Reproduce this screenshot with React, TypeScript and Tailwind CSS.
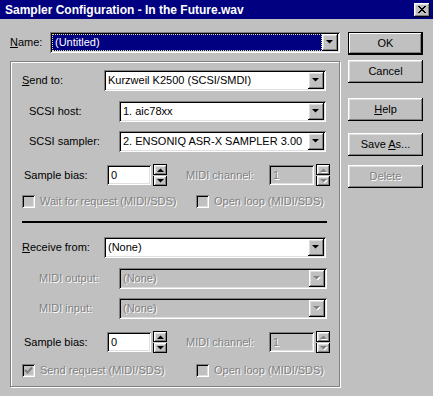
const sunken =
  'shadow-[inset_1px_1px_0_#808080,inset_-1px_-1px_0_#fff,inset_2px_2px_0_#000,inset_-2px_-2px_0_#dfdfdf]';
const raised =
  'shadow-[inset_-1px_-1px_0_#000,inset_1px_1px_0_#fff,inset_-2px_-2px_0_#808080,inset_2px_2px_0_#dfdfdf]';
const dim = 'text-[#808080] [text-shadow:1px_1px_0_#fff]';

function Arrow({ up, disabled }: { up?: boolean; disabled?: boolean }) {
  const pts = up ? '0,4 3.5,0.5 7,4' : '0,0 7,0 3.5,3.5';
  return (
    <svg width="8" height="5" viewBox="0 0 8 5" className="overflow-visible">
      {disabled && <polygon points={pts} fill="#fff" transform="translate(1 1)" />}
      <polygon points={pts} fill={disabled ? '#808080' : '#000'} />
    </svg>
  );
}

function Combo({ w, text, disabled, focused }: { w: string; text: string; disabled?: boolean; focused?: boolean }) {
  return (
    <div className={`flex h-[21px] p-[2px] ${w} ${sunken} ${disabled ? 'bg-[#c0c0c0]' : 'bg-white'}`}>
      <div
        className={`flex-1 flex items-center px-[2px] whitespace-nowrap overflow-hidden ${
          focused ? 'bg-[#000080] text-white border border-dotted border-[#e0e0a0] px-[1px]' : ''
        } ${disabled ? dim : ''}`}
      >
        {text}
      </div>
      <div className={`w-[16px] h-[17px] bg-[#c0c0c0] flex items-center justify-center ${raised}`}>
        <Arrow disabled={disabled} />
      </div>
    </div>
  );
}

function Spin({ disabled }: { disabled?: boolean }) {
  return (
    <div className="flex flex-col w-[14px] h-[22px] gap-[1px] ml-[2px]">
      <div className={`flex-1 bg-[#c0c0c0] flex items-center justify-center border-t border-l border-[#000] ${raised}`}>
        <Arrow up disabled={disabled} />
      </div>
      <div className={`flex-1 bg-[#c0c0c0] flex items-center justify-center border-l border-[#000] ${raised}`}>
        <Arrow disabled={disabled} />
      </div>
    </div>
  );
}

function Edit({ w, value, disabled }: { w: string; value: string; disabled?: boolean }) {
  return (
    <div className={`h-[20px] ${w} ${sunken} ${disabled ? 'bg-[#c0c0c0]' : 'bg-white'} flex items-center pl-[4px]`}>
      <span className={disabled ? dim : ''}>{value}</span>
    </div>
  );
}

function Check({ label, checked, wide }: { label: string; checked?: boolean; wide?: boolean }) {
  return (
    <div className={`flex items-center ${wide ? 'w-[174px]' : ''}`}>
      <div className={`w-[13px] h-[13px] bg-[#c0c0c0] ${sunken} flex items-center justify-center`}>
        {checked && (
          <svg width="9" height="9" viewBox="0 0 9 9">
            <path d="M1 4 L3.5 6.5 L8 1.5" stroke="#808080" strokeWidth="2" fill="none" />
          </svg>
        )}
      </div>
      <span className={`ml-[5px] ${dim}`}>{label}</span>
    </div>
  );
}

function BiasRow({ mt }: { mt: string }) {
  return (
    <div className={`flex items-center h-[22px] pl-[13px] ${mt}`}>
      <span className="w-[83px]">Sample bias:</span>
      <Edit w="w-[44px]" value="0" />
      <Spin />
      <span className={`ml-[19px] w-[83px] ${dim}`}>MIDI channel:</span>
      <Edit w="w-[45px]" value="1" disabled />
      <Spin disabled />
    </div>
  );
}

function Btn({ label, def, disabled, mt }: { label: React.ReactNode; def?: boolean; disabled?: boolean; mt: string }) {
  return (
    <div
      className={`w-[75px] h-[23px] bg-[#c0c0c0] flex items-center justify-center ${mt} ${
        def ? 'border border-black shadow-[inset_-1px_-1px_0_#000,inset_1px_1px_0_#fff,inset_-2px_-2px_0_#808080]' : raised
      } ${disabled ? dim : ''}`}
    >
      {label}
    </div>
  );
}

export default function App() {
  return (
    <div className="w-[433px] h-[396px] bg-[#c0c0c0] text-[11px] leading-none text-black font-['Liberation_Sans',Arial,sans-serif] overflow-hidden select-none">
      {/* Title bar */}
      <div className="h-[19px] bg-[#000080] flex items-center pl-[5px] pr-[3px]">
        <span className="flex-1 text-white font-bold text-[12px]">Sampler Configuration - In the Future.wav</span>
        <div className={`w-[16px] h-[14px] bg-[#c0c0c0] flex items-center justify-center ${raised}`}>
          <svg width="8" height="7" viewBox="0 0 8 7" shapeRendering="crispEdges">
            <path d="M0 0h2v1h-2zM6 0h2v1h-2zM1 1h2v1h-2zM5 1h2v1h-2zM2 2h4v1h-4zM3 3h2v1h-2zM2 4h4v1h-4zM1 5h2v1h-2zM5 5h2v1h-2zM0 6h2v1h-2zM6 6h2v1h-2z" fill="#000" />
          </svg>
        </div>
      </div>

      <div className="flex pl-[10px] pt-[13px]">
        {/* Left column */}
        <div className="w-[330px]">
          <div className="flex items-center h-[21px]">
            <span className="w-[40px]">
              <u>N</u>ame:
            </span>
            <Combo w="w-[290px]" text="(Untitled)" focused />
          </div>

          {/* Group */}
          <div className="mt-[8px] h-[326px] border border-[#808080] shadow-[inset_1px_1px_0_#fff,1px_1px_0_#fff] pt-[8px]">
            <div className="flex items-center h-[21px] pl-[11px]">
              <span className="w-[82px]">
                <u>S</u>end to:
              </span>
              <Combo w="w-[222px]" text="Kurzweil K2500 (SCSI/SMDI)" />
            </div>
            <div className="flex items-center h-[21px] pl-[18px] mt-[10px]">
              <span className="w-[90px]">SCSI host:</span>
              <Combo w="w-[207px]" text="1. aic78xx" />
            </div>
            <div className="flex items-center h-[21px] pl-[18px] mt-[9px]">
              <span className="w-[90px]">SCSI sampler:</span>
              <Combo w="w-[207px]" text="2. ENSONIQ ASR-X SAMPLER 3.00" />
            </div>

            <BiasRow mt="mt-[12px]" />

            <div className="flex items-center h-[15px] pl-[11px] mt-[8px]">
              <Check label="Wait for request (MIDI/SDS)" wide />
              <Check label="Open loop (MIDI/SDS)" />
            </div>

            <div className="ml-[11px] w-[305px] h-[2px] bg-black mt-[12px]" />

            <div className="flex items-center h-[21px] pl-[11px] mt-[14px]">
              <span className="w-[82px]">
                <u>R</u>eceive from:
              </span>
              <Combo w="w-[222px]" text="(None)" />
            </div>
            <div className="flex items-center h-[21px] pl-[28px] mt-[10px]">
              <span className={`w-[80px] ${dim}`}>MIDI output:</span>
              <Combo w="w-[208px]" text="(None)" disabled />
            </div>
            <div className="flex items-center h-[21px] pl-[28px] mt-[9px]">
              <span className={`w-[80px] ${dim}`}>MIDI input:</span>
              <Combo w="w-[208px]" text="(None)" disabled />
            </div>

            <BiasRow mt="mt-[12px]" />

            <div className="flex items-center h-[15px] pl-[11px] mt-[10px]">
              <Check label="Send request (MIDI/SDS)" checked wide />
              <Check label="Open loop (MIDI/SDS)" />
            </div>
          </div>
        </div>

        {/* Right column */}
        <div className="ml-[8px] flex flex-col">
          <Btn label="OK" def mt="mt-0" />
          <Btn label="Cancel" mt="mt-[5px]" />
          <Btn
            label={
              <span>
                <u>H</u>elp
              </span>
            }
            mt="mt-[15px]"
          />
          <Btn
            label={
              <span>
                Save <u>A</u>s...
              </span>
            }
            mt="mt-[12px]"
          />
          <Btn label="Delete" disabled mt="mt-[9px]" />
        </div>
      </div>
    </div>
  );
}
